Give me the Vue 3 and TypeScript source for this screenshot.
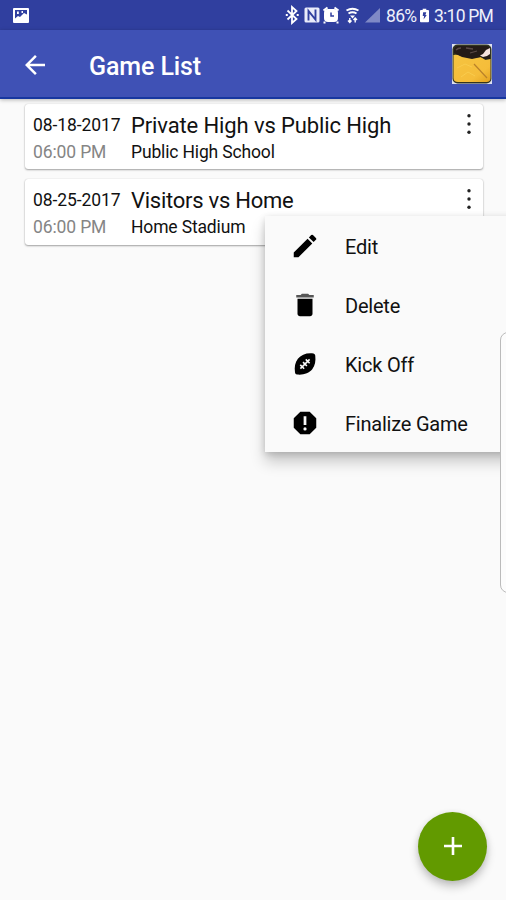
<script setup lang="ts">
interface Game {
  date: string
  time: string
  title: string
  place: string
  cls: string
}

const games: Game[] = [
  { date: '08-18-2017', time: '06:00 PM', title: 'Private High vs Public High', place: 'Public High School', cls: 'first' },
  { date: '08-25-2017', time: '06:00 PM', title: 'Visitors vs Home', place: 'Home Stadium', cls: 'second' },
]

const menu = [
  { id: 'edit', label: 'Edit' },
  { id: 'delete', label: 'Delete' },
  { id: 'kick', label: 'Kick Off' },
  { id: 'finalize', label: 'Finalize Game' },
]
</script>

<template>
  <div class="screen">
    <header class="status">
      <svg class="gallery" width="16" height="15" viewBox="0 0 16 15">
        <path fill="#fff" fill-rule="evenodd" d="M1 0h14a1 1 0 0 1 1 1v13a1 1 0 0 1-1 1H1a1 1 0 0 1-1-1V1a1 1 0 0 1 1-1zM2 2v8.500l3-2.500 2 1 4-4 3 1.500V2z" />
        <path fill="#fff" d="M4 3.500h1.800v2.500H4zM8.500 3h1.500v2H8.500z" />
      </svg>
      <div class="status-right">
        <svg class="icons" width="96" height="20" viewBox="0 0 96 20">
          <path d="M2.500 5.500l9 8.500-4.500 4V2l4.500 4-9 8.500" fill="none" stroke="#fff" stroke-width="1.800" />
          <path d="M0.800 10h2M11.700 10h2" stroke="#fff" stroke-width="2" />
          <rect x="19.500" y="2.500" width="15" height="15" rx="1.500" fill="#e9ebfa" />
          <path d="M23.500 15.500V6l7 8.500V4.500" fill="none" stroke="#303f9f" stroke-width="1.900" />
          <rect x="39" y="4" width="14" height="13" rx="4" fill="#fff" />
          <path d="M38.500 5.500l4-3M53.500 5.500l-4-3M40.500 17.500l-2 0M51.500 17.500l2 0" stroke="#fff" stroke-width="2" />
          <path d="M46 7.500v3.500h3" fill="none" stroke="#303f9f" stroke-width="1.500" />
          <path d="M61.500 5.500q6-3.500 12 0M63.500 8.500q4-2.500 8 0" fill="none" stroke="#fff" stroke-width="2" />
          <path d="M65 10.500h5l-2.500 3z" fill="#fff" />
          <path d="M64.800 13v4.500M63 15.500l1.800 2 1.700-2M70.200 17.500V13M68.500 15l1.700-2 1.800 2" stroke="#fff" stroke-width="1.400" fill="none" />
          <path d="M80 17.500L95 3v14.500z" fill="#7f89c6" />
        </svg>
        <span class="percent">86%</span>
        <svg class="battery" width="9" height="15" viewBox="0 0 10 15">
          <path fill="#fff" d="M3 0h4v1.500h2a1 1 0 0 1 1 1V14a1 1 0 0 1-1 1H1a1 1 0 0 1-1-1V2.500a1 1 0 0 1 1-1h2z" />
          <path fill="#303f9f" d="M3.500 4h3.500L6 7h1.500l-3.500 5 .5-4h-1.500z" />
        </svg>
        <span class="clock">3:10 PM</span>
      </div>
    </header>

    <div class="appbar">
      <svg class="back" width="30" height="30" viewBox="0 0 24 24">
        <path fill="#fff" d="M20 11H7.830l5.590-5.590L12 4l-8 8 8 8 1.410-1.410L7.830 13H20v-2z" />
      </svg>
      <h1>Game List</h1>
      <svg class="avatar" width="40" height="40" viewBox="0 0 40 40">
        <defs>
          <linearGradient id="gold" x1="0" y1="0" x2="1" y2="1">
            <stop offset="0" stop-color="#f5c440" />
            <stop offset=".7" stop-color="#f5bd3a" />
            <stop offset="1" stop-color="#e2a11f" />
          </linearGradient>
        </defs>
        <rect width="40" height="40" fill="#dde0ee" />
        <rect x="0.500" y="0.500" width="39" height="39" rx="5" fill="#32351f" />
        <path d="M1.500 11q3-1 8 1l10 2 9-1 5 3 5-1v19q0 4-4 4H6q-4.500 0-4.500-4z" fill="url(#gold)" />
        <path d="M2 9V5q1-3 4-3h28q4 0 4 4v9l-5 0-4-2-9 2-10-2z" fill="#241b17" />
        <path d="M4 6q2-2 5-2M14 4l7 1M18 9l7-2" stroke="#5b4a47" stroke-width="1.300" fill="none" />
        <path d="M28 11.500l3-1.500 3-4 4-2v6l-3 2-4 1z" fill="#f5e3df" />
        <path d="M22 20l13 14" stroke="#b9812a" stroke-width="1.200" />
        <path d="M5 24l8-4 7 3M9 33l7-5 7 4" stroke="#f9cc4d" stroke-width="1" fill="none" />
      </svg>
    </div>

    <main class="list">
      <article v-for="g in games" :key="g.date" class="card" :class="g.cls">
        <div class="when">
          <div class="date">{{ g.date }}</div>
          <div class="time">{{ g.time }}</div>
        </div>
        <div class="what">
          <div class="title">{{ g.title }}</div>
          <div class="place">{{ g.place }}</div>
        </div>
        <svg class="more" width="6" height="22" viewBox="0 0 6 22">
          <circle cx="3" cy="2.700" r="1.700" /><circle cx="3" cy="11" r="1.700" /><circle cx="3" cy="19.300" r="1.700" />
        </svg>
      </article>
    </main>

    <div class="menu">
      <div v-for="m in menu" :key="m.id" class="item">
        <svg width="30" height="30" viewBox="0 0 24 24">
          <path v-if="m.id === 'edit'" d="M3 17.250V21h3.750L17.810 9.940l-3.750-3.750L3 17.250zM20.710 7.040a1 1 0 0 0 0-1.410l-2.340-2.340a1 1 0 0 0-1.410 0l-1.830 1.830 3.750 3.750 1.830-1.830z" />
          <template v-else-if="m.id === 'delete'">
            <path d="M6 19c0 1.100.9 2 2 2h8c1.100 0 2-.9 2-2V7H6z" />
            <path class="lid" d="M19 4h-3.500l-1-1h-5l-1 1H5v2h14z" />
          </template>
          <template v-else-if="m.id === 'kick'">
            <path d="M18.800 3.600C13.500 2.900 9 4.500 6.300 7.800 4 10.800 3.400 14.500 4 18.800q.2 1.400 1.500 1.600c5 .6 9.700-1 12.300-4.200 2.300-3 2.900-6.500 2.400-11q-.2-1.400-1.400-1.600z" />
            <path class="lace" d="M8.300 15.700l7.400-7.400M8.200 12.700l3.100 3.100M10.400 10.500l3.100 3.100M12.600 8.300l3.100 3.100" />
          </template>
          <path v-else fill-rule="evenodd" d="M15.730 3H8.270L3 8.270v7.460L8.270 21h7.460L21 15.730V8.270zM10.900 6.500h2.200v7h-2.200zM12 15.400a1.300 1.300 0 1 1 0 2.600 1.300 1.300 0 0 1 0-2.600z" />
        </svg>
        <span>{{ m.label }}</span>
      </div>
    </div>

    <div class="edge"></div>

    <button class="fab" type="button" aria-label="Add">
      <svg width="18" height="18" viewBox="0 0 18 18"><path d="M9 0v18M0 9h18" stroke="#fff" stroke-width="2.600" /></svg>
    </button>
  </div>
</template>

<style>
body {
  margin: 0;
  overflow: hidden;
}
</style>

<style scoped>
.screen {
  position: relative;
  width: 506px;
  height: 900px;
  overflow: hidden;
  background: #fafafa;
  font-family: Roboto, sans-serif;
  color: #111;
}
.status {
  box-sizing: border-box;
  height: 30px;
  padding: 0 13px 0 13px;
  display: flex;
  align-items: center;
  justify-content: space-between;
  background: #303f9f;
  color: #eef0fb;
}
.status-right {
  display: flex;
  align-items: center;
  font-size: 17.500px;
  line-height: 30px;
  white-space: nowrap;
}
.icons {
  margin-right: 5px;
}
.percent {
  width: 30px;
  margin-top: 2px;
  letter-spacing: -0.700px;
}
.battery {
  margin: 0 5px 0 4px;
}
.clock {
  width: 59px;
  margin-top: 2px;
  letter-spacing: -0.750px;
}
.appbar {
  box-sizing: border-box;
  position: relative;
  z-index: 1;
  height: 69px;
  padding: 0 14px 0 20px;
  display: flex;
  align-items: center;
  background: #3f51b5;
  border-bottom: 2px solid #1737a0;
  box-shadow: 0 1px 4px rgba(0, 0, 0, 0.28);
}
.back {
  margin-top: 2px;
}
h1 {
  flex: 1;
  margin: 6px 0 0 39px;
  font-size: 25px;
  line-height: 30px;
  font-weight: 500;
  letter-spacing: -0.100px;
  color: #fff;
}
.list {
  display: grid;
  gap: 10px;
  padding: 4.500px 23px 0 25px;
}
.card {
  box-sizing: border-box;
  height: 65.500px;
  padding: 0 11px 0 8px;
  display: flex;
  background: #fff;
  border-radius: 3px;
  box-shadow: 0 1px 2px rgba(0, 0, 0, 0.35), 0 0 1px rgba(0, 0, 0, 0.2);
}
.when {
  width: 98px;
}
.what {
  flex: 1;
}
.when,
.what {
  white-space: nowrap;
}
.date,
.title {
  height: 34px;
  line-height: 42px;
}
.time,
.place {
  line-height: 29px;
}
.date {
  font-size: 17.500px;
  letter-spacing: -0.080px;
}
.time {
  font-size: 17.500px;
  letter-spacing: -0.120px;
  color: #858585;
}
.title {
  line-height: 44px;
  font-size: 22px;
  letter-spacing: -0.120px;
}
.second .title {
  letter-spacing: -0.250px;
}
.place {
  font-size: 17.500px;
  letter-spacing: -0.150px;
}
.more {
  margin-top: 9px;
  fill: #222;
}
.menu {
  position: absolute;
  left: 265px;
  top: 216px;
  width: 260px;
  height: 236px;
  background: #fafafa;
  box-shadow: 0 10px 14px rgba(0, 0, 0, 0.2), 0 2px 7px rgba(0, 0, 0, 0.16);
}
.item {
  height: 59px;
  padding-left: 25px;
  display: flex;
  align-items: center;
  gap: 25px;
  font-size: 20px;
  letter-spacing: -0.220px;
}
.item span {
  margin-top: 2px;
}
.lid {
  fill: #555;
}
.lace {
  stroke: #fafafa;
  stroke-width: 1.300;
}
.edge {
  box-sizing: border-box;
  position: absolute;
  left: 500px;
  top: 332px;
  width: 20px;
  height: 261px;
  border: 1.500px solid #bbb;
  border-radius: 8px;
  background: #fcfcfc;
}
.fab {
  position: absolute;
  left: 418px;
  top: 811.500px;
  width: 69px;
  height: 69px;
  padding: 0;
  border: 0;
  border-radius: 50%;
  display: grid;
  place-items: center;
  background: #629a00;
  box-shadow: 0 6px 10px rgba(0, 0, 0, 0.2), 0 1px 6px rgba(0, 0, 0, 0.1);
}
</style>
